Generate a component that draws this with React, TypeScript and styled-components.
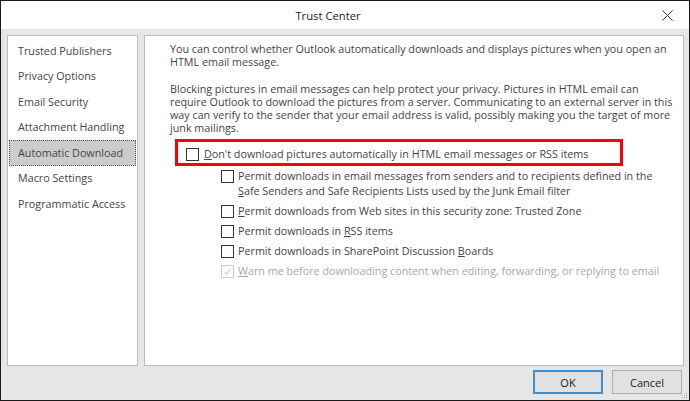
import React from "react";
import styled, { createGlobalStyle } from "styled-components";

const GlobalStyle = createGlobalStyle`
  html, body {
    margin: 0;
    padding: 0;
    background: #ffffff;
  }
  body {
    font-family: "Segoe UI", "Open Sans", sans-serif;
  }
  * {
    box-sizing: border-box;
  }
`;

const Window = styled.div`
  position: relative;
  width: 690px;
  height: 401px;
  border: 1px solid #1a1a1a;
  display: flex;
  flex-direction: column;
  background: #e6e6e6;
  color: #444444;
  font-size: 10.75px;
`;

const TitleBar = styled.div`
  flex: none;
  height: 28px;
  background: #ffffff;
  display: flex;
  align-items: center;
`;

const Title = styled.div`
  flex: 1;
  text-align: center;
  padding-left: 10px;
  font-size: 11.25px;
  color: #222222;
`;

const CloseButton = styled.div`
  width: 44px;
  height: 28px;
  display: flex;
  align-items: center;
  justify-content: center;
`;

const Body = styled.div`
  flex: 1;
  display: flex;
  flex-direction: column;
  padding: 6px 5px 0 6px;
`;

const Panels = styled.div`
  display: flex;
  gap: 6px;
  height: 331px;
`;

const NavPanel = styled.div`
  width: 131px;
  background: #ffffff;
  border: 1px solid #bdbdbd;
  padding: 2px 1px 0 1px;
`;

const NavItem = styled.div<{ $selected?: boolean }>`
  height: 25.5px;
  display: flex;
  align-items: center;
  padding-left: 9px;
  white-space: nowrap;
  background: ${(p) => (p.$selected ? "#cccccc" : "transparent")};
  outline: ${(p) => (p.$selected ? "1px dotted #555555" : "none")};
  outline-offset: -1px;
`;

const ContentPanel = styled.div`
  flex: 1;
  background: #ffffff;
  border: 1px solid #bdbdbd;
  padding: 7px 0 0 25px;
`;

const Paragraph = styled.p<{ $gap?: number }>`
  margin: ${(p) => p.$gap ?? 0}px 0 0 0;
  line-height: 13px;
  white-space: nowrap;
`;

const Highlight = styled.div`
  width: 448px;
  margin: 4px 0 0 5px;
  border: 3px solid #ff0000;
  padding: 5px 8px 1px 8px;
  display: flex;
  align-items: flex-start;
  gap: 5px;
`;

const SubList = styled.div`
  margin: 3px 0 0 51px;
  display: flex;
  flex-direction: column;
  gap: 5px;
`;

const Option = styled.div`
  display: flex;
  align-items: flex-start;
  gap: 4px;
`;

const Label = styled.span<{ $disabled?: boolean }>`
  line-height: 15px;
  white-space: nowrap;
  color: ${(p) => (p.$disabled ? "#a8a8a8" : "#444444")};
`;

const Box = styled.span<{ $disabled?: boolean }>`
  flex: none;
  width: 13px;
  height: 13px;
  margin-top: 1px;
  background: #ffffff;
  border: 1px solid ${(p) => (p.$disabled ? "#cccccc" : "#333333")};
  display: flex;
  align-items: center;
  justify-content: center;
`;

const ButtonRow = styled.div`
  display: flex;
  justify-content: flex-end;
  gap: 9px;
  padding: 4px 2px 0 0;
`;

const Button = styled.div<{ $primary?: boolean }>`
  width: 70px;
  height: 24px;
  display: flex;
  align-items: center;
  justify-content: center;
  background: #e1e1e1;
  border: ${(p) => (p.$primary ? "2px solid #3d8fd6" : "1px solid #adadad")};
  color: #1a1a1a;
  font-size: 11px;
`;

const Grip = styled.svg`
  position: absolute;
  right: 1px;
  bottom: 1px;
`;

function Checkbox({ checked, disabled }: { checked?: boolean; disabled?: boolean }) {
  return (
    <Box $disabled={disabled}>
      {checked && (
        <svg width="9" height="9" viewBox="0 0 9 9">
          <polyline
            points="1,4.5 3.5,7 8,1.5"
            fill="none"
            stroke={disabled ? "#bdbdbd" : "#333333"}
            strokeWidth="1"
          />
        </svg>
      )}
    </Box>
  );
}

const navItems = [
  "Trusted Publishers",
  "Privacy Options",
  "Email Security",
  "Attachment Handling",
  "Automatic Download",
  "Macro Settings",
  "Programmatic Access",
];

export default function App() {
  return (
    <>
      <GlobalStyle />
      <Window>
        <TitleBar>
          <Title>Trust Center</Title>
          <CloseButton>
            <svg width="11" height="11" viewBox="0 0 11 11">
              <path d="M0.5 0.5 L10.5 10.5 M10.5 0.5 L0.5 10.5" stroke="#333333" strokeWidth="1" />
            </svg>
          </CloseButton>
        </TitleBar>
        <Body>
          <Panels>
            <NavPanel>
              {navItems.map((item) => (
                <NavItem key={item} $selected={item === "Automatic Download"}>
                  {item}
                </NavItem>
              ))}
            </NavPanel>
            <ContentPanel>
              <Paragraph>
                You can control whether Outlook automatically downloads and displays pictures when you open an
                <br />
                HTML email message.
              </Paragraph>
              <Paragraph $gap={14}>
                Blocking pictures in email messages can help protect your privacy. Pictures in HTML email can
                <br />
                require Outlook to download the pictures from a server. Communicating to an external server in this
                <br />
                way can verify to the sender that your email address is valid, possibly making you the target of more
                <br />
                junk mailings.
              </Paragraph>
              <Highlight>
                <Checkbox />
                <Label>
                  <u>D</u>on't download pictures automatically in HTML email messages or RSS items
                </Label>
              </Highlight>
              <SubList>
                <Option>
                  <Checkbox />
                  <Label>
                    Permit downloads in email messages from senders and to recipients defined in the
                    <br />
                    <u>S</u>afe Senders and Safe Recipients Lists used by the Junk Email filter
                  </Label>
                </Option>
                <Option>
                  <Checkbox />
                  <Label>
                    <u>P</u>ermit downloads from Web sites in this security zone: Trusted Zone
                  </Label>
                </Option>
                <Option>
                  <Checkbox />
                  <Label>
                    Permit downloads in <u>R</u>SS items
                  </Label>
                </Option>
                <Option>
                  <Checkbox />
                  <Label>
                    Permit downloads in SharePoint Discussion <u>B</u>oards
                  </Label>
                </Option>
                <Option>
                  <Checkbox checked disabled />
                  <Label $disabled>
                    <u>W</u>arn me before downloading content when editing, forwarding, or replying to email
                  </Label>
                </Option>
              </SubList>
            </ContentPanel>
          </Panels>
          <ButtonRow>
            <Button $primary>OK</Button>
            <Button>Cancel</Button>
          </ButtonRow>
        </Body>
        <Grip width="6" height="6" viewBox="0 0 6 6">
          <rect x="4" y="0" width="1" height="1" fill="#aaaaaa" />
          <rect x="2" y="2" width="1" height="1" fill="#aaaaaa" />
          <rect x="4" y="2" width="1" height="1" fill="#aaaaaa" />
          <rect x="0" y="4" width="1" height="1" fill="#aaaaaa" />
          <rect x="2" y="4" width="1" height="1" fill="#aaaaaa" />
          <rect x="4" y="4" width="1" height="1" fill="#aaaaaa" />
        </Grip>
      </Window>
    </>
  );
}
